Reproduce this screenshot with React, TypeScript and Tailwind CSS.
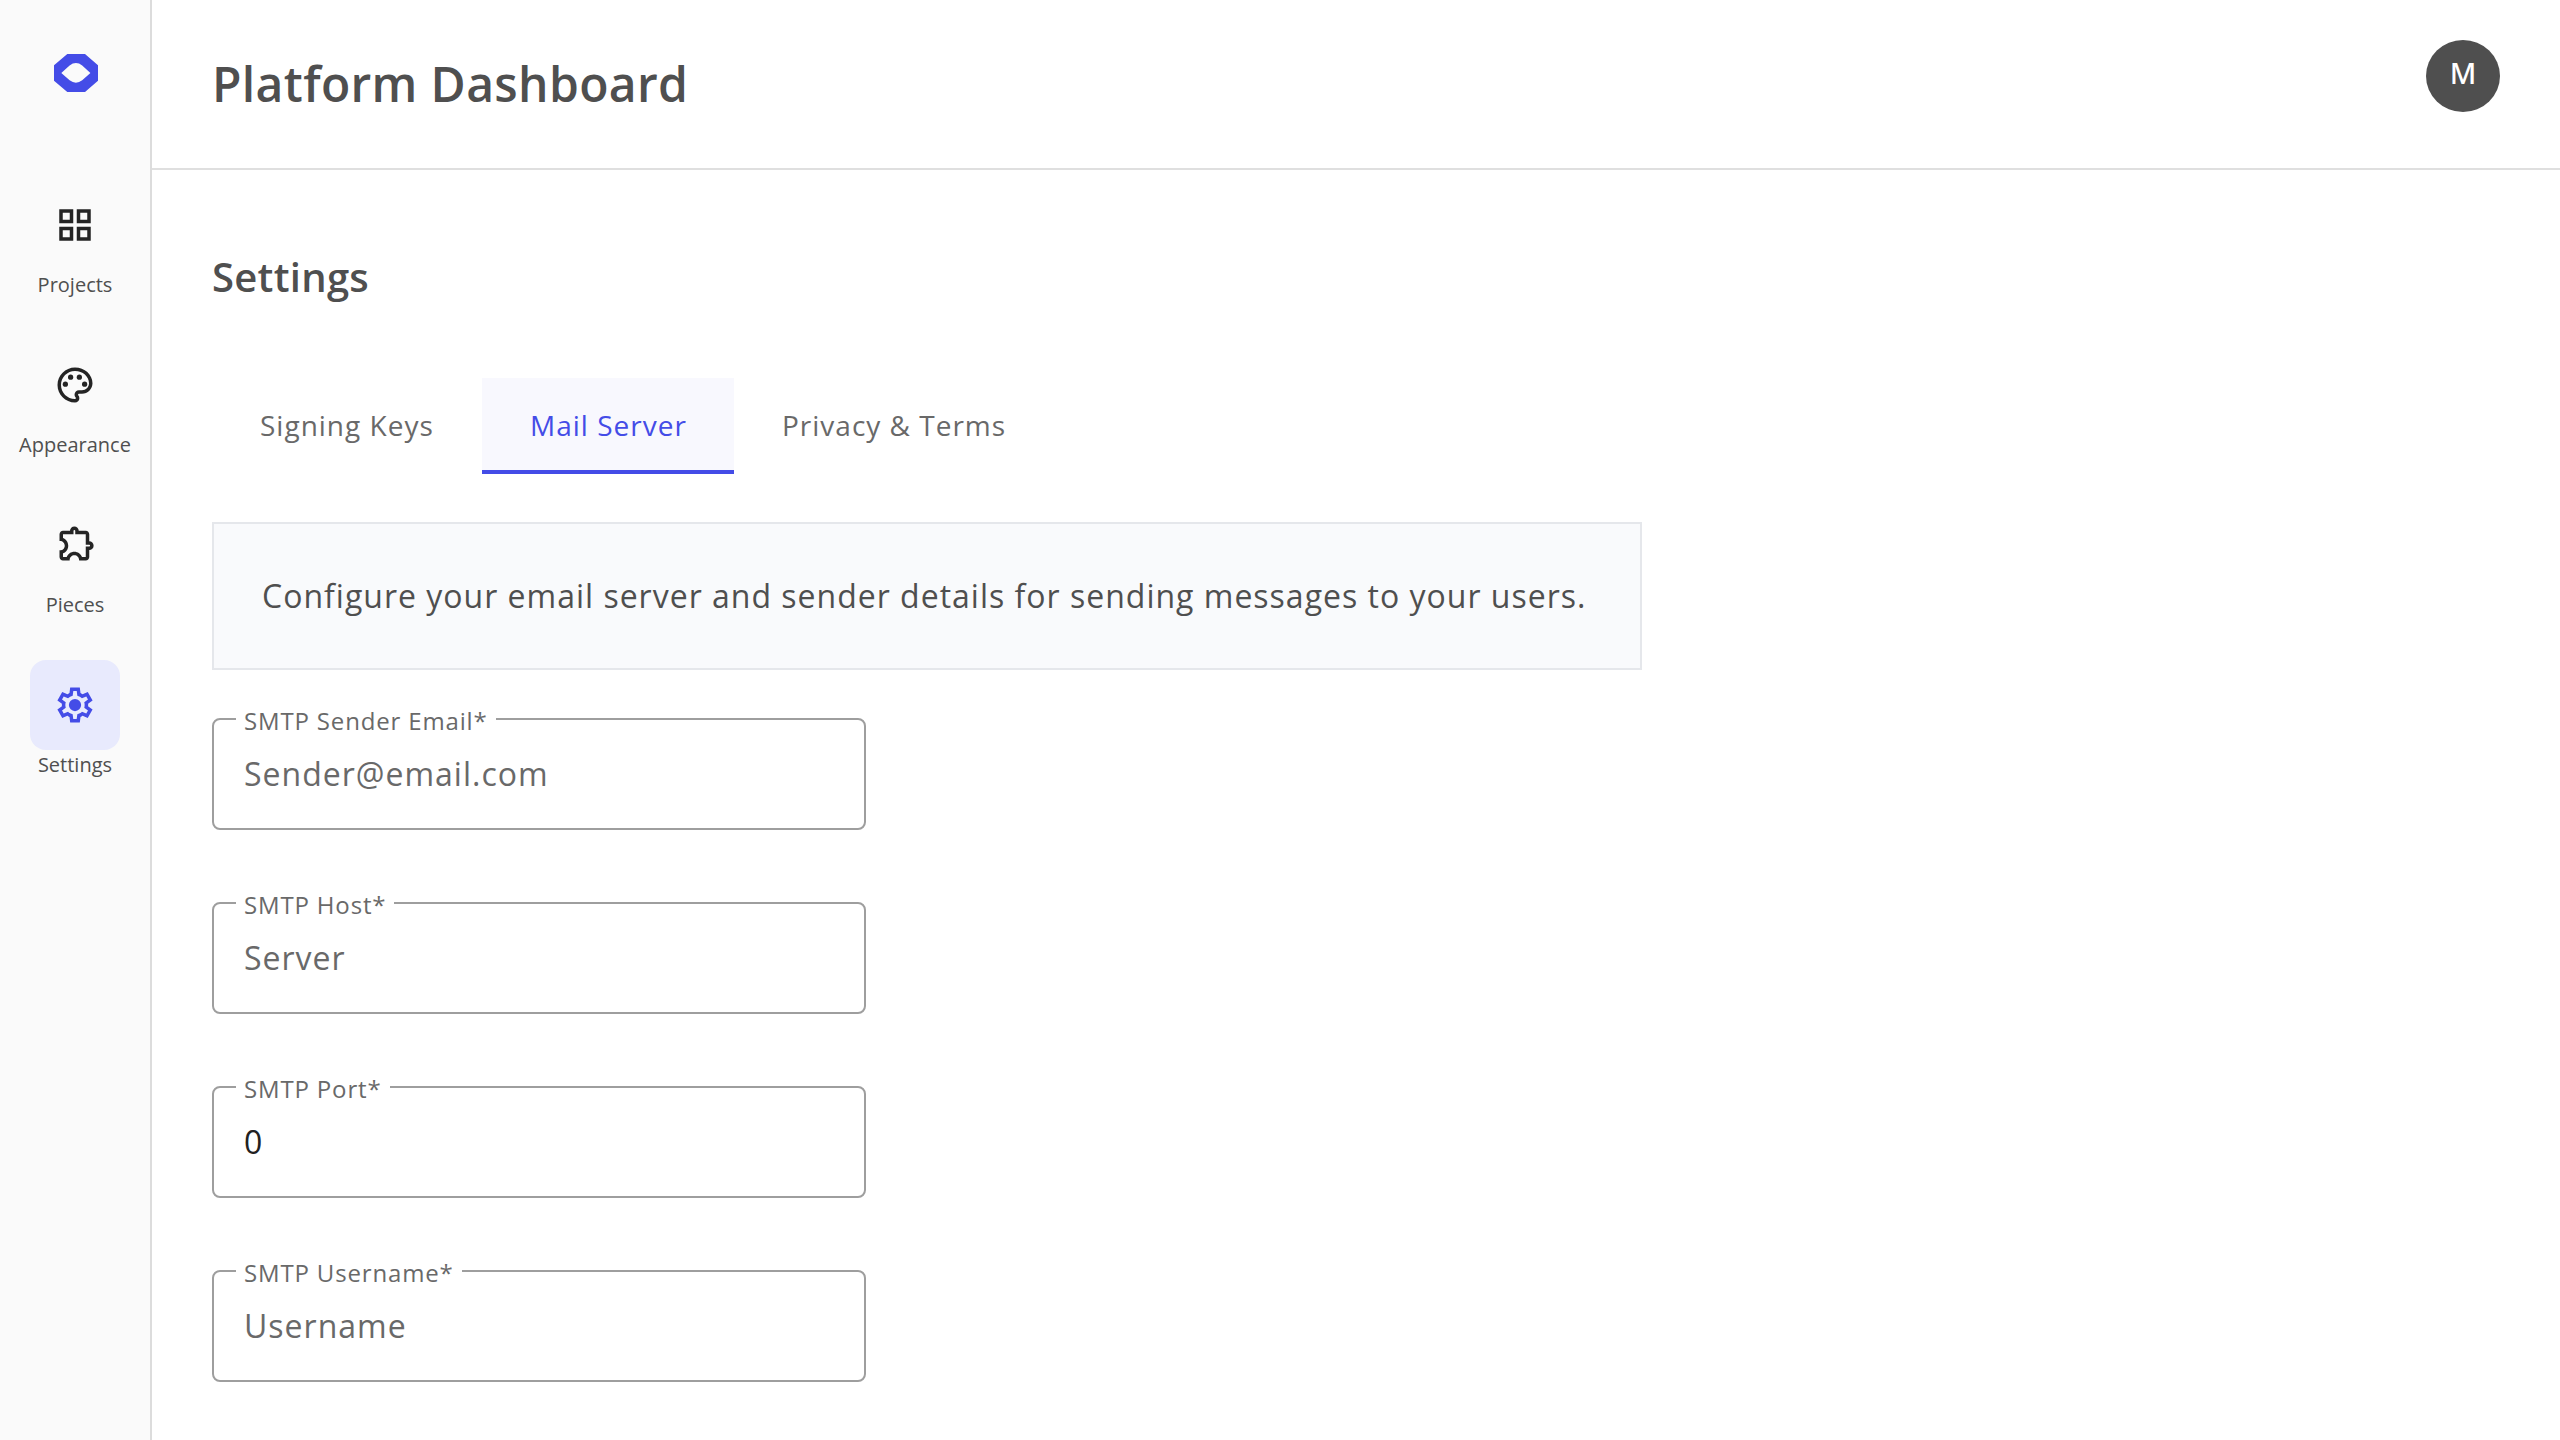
import type { ReactNode } from 'react';
import { MdOutlineExtension, MdOutlineGridView, MdOutlinePalette } from 'react-icons/md';

function Logo() {
  return (
    <svg viewBox="0 0 44 38" className="h-[38px] w-11" fill="#444ce7">
      <path
        fillRule="evenodd"
        d="M13.3 0H31L44 11.3V26.7L31 38H13.3L0 26.7V11.3ZM7.3 19L15.6 26.3Q22 31.2 28.2 26.3L36.4 19L28.2 11.5Q22 6.6 15.6 11.5Z"
      />
    </svg>
  );
}

function GearIcon() {
  return (
    <svg viewBox="0 0 24 24" className="size-[42px]" fill="currentColor">
      <path
        fillRule="evenodd"
        d="m9.25 22-.4-3.2q-.325-.125-.612-.3-.288-.175-.563-.375L4.7 19.375l-2.75-4.75 2.575-1.95Q4.5 12.5 4.5 12.337v-.675q0-.162.025-.337L1.95 9.375l2.75-4.75 2.975 1.25q.275-.2.575-.375.3-.175.6-.3l.4-3.2h5.5l.4 3.2q.325.125.613.3.287.175.562.375l2.975-1.25 2.75 4.75-2.575 1.95q.025.175.025.337v.675q0 .163-.05.338l2.575 1.95-2.75 4.75-2.95-1.25q-.275.2-.575.375-.3.175-.6.3l-.4 3.2ZM11 20h1.975l.35-2.65q.775-.2 1.438-.588.662-.387 1.212-.937l2.475 1.025.975-1.7-2.15-1.625q.125-.35.175-.738.05-.387.05-.787t-.05-.788q-.05-.387-.175-.737l2.15-1.625-.975-1.7-2.475 1.05q-.55-.575-1.212-.963-.663-.387-1.438-.587L13 4h-1.975l-.35 2.65q-.775.2-1.437.587-.663.388-1.213.938L5.55 7.15l-.975 1.7 2.15 1.6q-.125.375-.175.75-.05.375-.05.8 0 .4.05.775.05.375.175.75l-2.15 1.625.975 1.7 2.475-1.05q.55.575 1.213.962.662.388 1.437.588ZM8.5 12a3.5 3.5 0 1 0 7 0a3.5 3.5 0 1 0-7 0Z"
      />
    </svg>
  );
}

function NavItem({ label, active = false, children }: { label: string; active?: boolean; children: ReactNode }) {
  return (
    <a className="flex flex-col items-center">
      <span
        className={
          active
            ? 'flex size-[90px] items-center justify-center rounded-2xl bg-[#e8eafd] text-[#444ce7]'
            : 'flex size-[90px] items-center justify-center text-[#242424]'
        }
      >
        {children}
      </span>
      <span className="text-xl/[30px] text-[#4f4f4f]">{label}</span>
    </a>
  );
}

function Tab({ label, active = false }: { label: string; active?: boolean }) {
  return (
    <button
      className={
        active
          ? 'h-24 w-[252px] border-b-4 border-[#444ce7] bg-[#f8f8fe] pt-0.5 pl-12 text-left text-[28px]/10 tracking-[1px] text-[#444ce7]'
          : 'h-24 min-w-[270px] border-b-4 border-transparent pt-0.5 pl-12 text-left text-[28px]/10 tracking-[1px] text-[#696969]'
      }
    >
      {label}
    </button>
  );
}

function Field({ label, placeholder, value }: { label: string; placeholder?: string; value?: string }) {
  return (
    <div className="relative h-28 w-[654px] rounded-lg border-2 border-[#9e9e9e] px-[30px] pt-[30px]">
      <label className="absolute -top-[15px] left-[22px] bg-white px-2 text-2xl/8 tracking-[0.84px] whitespace-nowrap text-[#696969]">
        {label}*
      </label>
      <input
        className="block h-12 w-full text-[32px]/[48px] tracking-[1px] text-[#212121] outline-none placeholder:text-[#696969]"
        placeholder={placeholder}
        defaultValue={value}
      />
    </div>
  );
}

export default function App() {
  return (
    <div className="flex h-[1440px] w-[2560px] overflow-hidden bg-white font-['Open_Sans',sans-serif]">
      <aside className="flex w-[152px] shrink-0 flex-col items-center border-r-2 border-[#dcdcdc] bg-[#fafafa] pt-[54px]">
        <div className="ml-[2px]">
          <Logo />
        </div>
        <nav className="mt-[88px] flex flex-col gap-10">
          <NavItem label="Projects">
            <MdOutlineGridView className="size-[42px]" />
          </NavItem>
          <NavItem label="Appearance">
            <MdOutlinePalette className="size-[42px]" />
          </NavItem>
          <NavItem label="Pieces">
            <MdOutlineExtension className="mb-[3.5px] ml-[3.5px] size-[42px]" />
          </NavItem>
          <NavItem label="Settings" active>
            <GearIcon />
          </NavItem>
        </nav>
      </aside>
      <div className="flex grow flex-col">
        <header className="flex h-[170px] shrink-0 items-start justify-between border-b-2 border-[#dfdfdf] pr-[60px] pl-[60px]">
          <h1 className="pt-[52px] text-[48px]/[64px] font-semibold tracking-[0.36px] text-[#4f4f4f]">Platform Dashboard</h1>
          <div className="mt-10 flex h-[72px] w-[74px] justify-center rounded-[50%] bg-[#4f4f4f] pt-[13px] font-['Noto_Sans',sans-serif] text-[29px]/10 font-medium text-white">
            M
          </div>
        </header>
        <main className="flex flex-col items-start px-[60px] pt-[79px]">
          <h2 className="text-[40px]/[56px] font-semibold tracking-[0.28px] text-[#4f4f4f]">Settings</h2>
          <div className="mt-[73px] flex">
            <Tab label="Signing Keys" />
            <Tab label="Mail Server" active />
            <Tab label="Privacy & Terms" />
          </div>
          <p className="mt-12 flex h-[148px] w-[1430px] items-center border-2 border-[#e5e7eb] bg-[#f9fafc] px-12 text-[32px]/[48px] tracking-[1px] whitespace-nowrap text-[#4f4f4f]">
            Configure your email server and sender details for sending messages to your users.
          </p>
          <form className="mt-12 flex flex-col gap-[72px]">
            <Field label="SMTP Sender Email" placeholder="Sender@email.com" />
            <Field label="SMTP Host" placeholder="Server" />
            <Field label="SMTP Port" value="0" />
            <Field label="SMTP Username" placeholder="Username" />
          </form>
        </main>
      </div>
    </div>
  );
}
